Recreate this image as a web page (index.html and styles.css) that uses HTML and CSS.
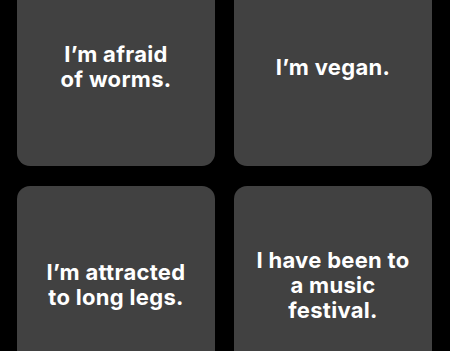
FILE: index.html
```html
<!DOCTYPE html>
<html lang="en">
<head>
<meta charset="utf-8">
<title>Cards</title>
<link rel="stylesheet" href="styles.css">
</head>
<body>
<main class="grid">
  <div class="card"><p class="card-text">I’m afraid<br>of worms.</p></div>
  <div class="card"><p class="card-text">I’m vegan.</p></div>
  <div class="card"><p class="card-text">I’m attracted<br>to long legs.</p></div>
  <div class="card"><p class="card-text">I have been to<br>a music<br>festival.</p></div>
</main>
</body>
</html>
```
FILE: styles.css
```css
html, body {
  margin: 0;
  padding: 0;
  background: #000;
}
body {
  width: 450px;
  height: 351px;
  overflow: hidden;
  font-family: Inter, "Noto Sans", "Liberation Sans", sans-serif;
}
.grid {
  display: grid;
  grid-template-columns: 198px 198px;
  column-gap: 19px;
  row-gap: 20px;
  margin-top: -32px;
  padding-left: 17px;
}
.card {
  height: 198px;
  background: #414141;
  border-radius: 13px;
  display: flex;
  align-items: center;
  justify-content: center;
}
.card-text {
  margin: 0;
  color: #fff;
  font-weight: 700;
  font-size: 22px;
  line-height: 25px;
  letter-spacing: 0.3px;
  text-align: center;
}
```
